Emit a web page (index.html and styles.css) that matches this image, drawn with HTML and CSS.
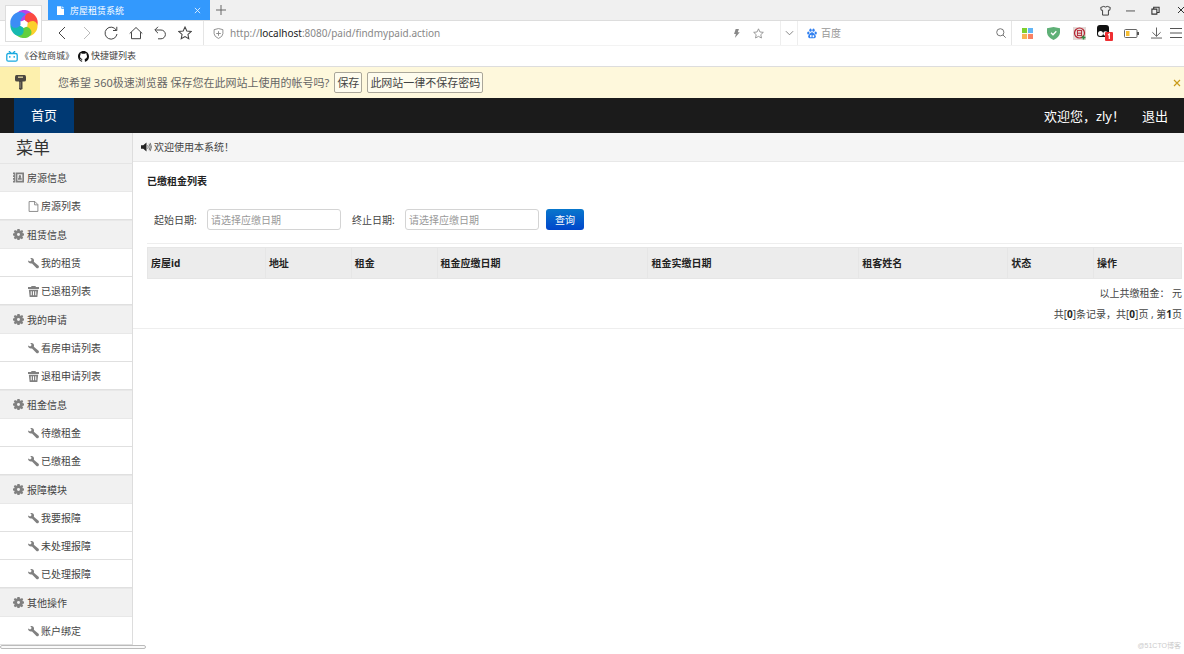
FILE: index.html
```html
<!DOCTYPE html>
<html lang="zh-CN">
<head>
<meta charset="utf-8">
<title>房屋租赁系统</title>
<link rel="stylesheet" href="styles.css">
</head>
<body>
<svg class="defs" aria-hidden="true">
  <symbol id="cog" viewBox="0 0 20 20"><path fill-rule="evenodd" d="M8 0h4l.6 2.600 1.600.7L16.500 1.900l2.100 2.100-1.400 2.300.6 1.600L20 8.200v3.600l-2.300.5-.6 1.600 1.500 2.200-2.400 2.400-2.300-1.400-1.500.6L12 20H8l-.5-2.300-1.500-.6-2.200 1.400-2.400-2.400 1.500-2.200-.6-1.600L0 11.800V8.200l2.300-.5.6-1.500L1.400 4l2.300-2.300L6 3.200l1.500-.6zM10 7.300a2.700 2.700 0 1 0 0 5.400 2.700 2.700 0 0 0 0-5.400z"/></symbol>
  <symbol id="wrench" viewBox="0 0 20 20"><path d="M0 4.500 3.800 6.200 6 4.800l.2-2.600L3.800 0c3.200-.5 6 .6 6.900 3.200.4 1.300.3 2.500-.1 3.400l8.600 7.600c2.200 2.400-1.500 6.200-3.900 4L7.300 9.800C3.800 10.800 0 8.800 0 4.500z"/></symbol>
  <symbol id="trash" viewBox="0 0 20 20"><path fill-rule="evenodd" d="M6 0h8v2h6v3.500H0V2h6zM1.500 7h17L17 20H3zM5 9.500V17h1.800V9.500zm4.100 0V17h1.800V9.500zm4.100 0V17H15V9.500z"/></symbol>
  <symbol id="page" viewBox="0 0 20 20"><path d="M2 1h10.500L18 6.500V19H2zM12 1v6h6" fill="none" stroke="currentColor" stroke-width="1.600"/></symbol>
  <symbol id="book" viewBox="0 0 20 20"><path fill-rule="evenodd" d="M0 1h4v18H0v-3h2v-2H0v-3h2V9H0V6h2V4H0zM5 1h15v18H5zm3 3v12h9V4zm4.500 1.500a2.300 2.300 0 0 1 1.200 4.200c1.400.6 2.300 1.800 2.300 4.300H9c0-2.500.9-3.700 2.300-4.300a2.300 2.300 0 0 1 1.200-4.200z"/></symbol>
  <symbol id="star" viewBox="0 0 20 20"><path d="m10 1.500 2.600 5.700 6.200.7-4.600 4.200 1.200 6.100L10 15.200l-5.400 3 1.200-6.100L1.200 7.900l6.200-.7z" fill="none" stroke="currentColor" stroke-width="1.500"/></symbol>
</svg>

<header class="browser">
  <div class="logo">
    <svg viewBox="-15 -15 30 30" width="30" height="30">
      <defs><path id="petal" d="M-2.500-2.500C-11-4-10-14 0-14C7-14 11-8 9-3C7-5 2-6-2.500-2.500Z"/></defs>
      <use href="#petal" fill="#b942e8" transform="rotate(5)"/>
      <use href="#petal" fill="#fb4a43" transform="rotate(65)"/>
      <use href="#petal" fill="#fbd02c" transform="rotate(125)"/>
      <use href="#petal" fill="#62cf3d" transform="rotate(185)"/>
      <use href="#petal" fill="#16b9b0" transform="rotate(240)"/>
      <use href="#petal" fill="#3c8df5" transform="rotate(300)"/>
      <circle r="2.800" fill="#fff"/>
    </svg>
  </div>
  <div class="tabs">
    <div class="tab">
      <svg viewBox="0 0 8 10" width="7" height="9"><path fill="#fff" d="M0 0h5v3h3v7H0zM6 0l2 2H6z"/></svg>
      <span class="tab-title">房屋租赁系统</span>
      <button class="tab-close" aria-label="关闭标签"><svg viewBox="0 0 8 8" width="7" height="7"><path d="m1 1 6 6M7 1 1 7" stroke="#e5f2ff"/></svg></button>
    </div>
    <button class="new-tab" aria-label="新标签"><svg viewBox="0 0 10 10" width="10" height="10"><path d="M5 0v10M0 5h10" stroke="#666"/></svg></button>
    <div class="window-controls">
      <button aria-label="皮肤"><svg viewBox="0 0 12 12" width="11" height="11"><path d="M4 1.500q2 1.500 4 0l3.200 1.200-.5 3H9.200V11H2.800V5.700H1.300l-.5-3z" fill="none" stroke="#333"/></svg></button>
      <button aria-label="最小化"><svg viewBox="0 0 10 10" width="9" height="9"><path d="M0 5.500h10" stroke="#444"/></svg></button>
      <button aria-label="还原"><svg viewBox="0 0 10 10" width="9" height="9"><path d="M1 3.500h5.500V9H1zM3 3V1.300h6v6H7" fill="none" stroke="#333" stroke-width="1.200"/></svg></button>
      <button aria-label="关闭"><svg viewBox="0 0 8 8" width="8" height="8"><path d="m1 1 6 6M7 1 1 7" stroke="#333"/></svg></button>
    </div>
  </div>

  <div class="toolbar">
    <nav class="tools">
      <button aria-label="后退"><svg viewBox="0 0 14 14" width="14" height="14"><path d="M10 1 4 7l6 6"/></svg></button>
      <button aria-label="前进" class="off"><svg viewBox="0 0 14 14" width="14" height="14"><path d="m4 1 6 6-6 6"/></svg></button>
      <button aria-label="刷新"><svg viewBox="0 0 14 14" width="14" height="14"><path d="M12.300 4.200A6 6 0 1 0 13 8M12.800.8v3.700H9"/></svg></button>
      <button aria-label="主页"><svg viewBox="0 0 14 14" width="14" height="14"><path d="M.7 7.500 7 1.500l6.300 6M2.500 6.200v6.500h9V6.200"/></svg></button>
      <button aria-label="撤销"><svg viewBox="0 0 14 14" width="14" height="14"><path d="M5 .8 1.800 4 5 7.200M2 4h6a4.400 4.400 0 0 1 0 8.800H5"/></svg></button>
      <button aria-label="收藏"><svg width="14" height="14"><use href="#star"/></svg></button>
    </nav>
    <div class="address">
      <svg viewBox="0 0 12 12" width="11" height="11" fill="none" stroke="#888"><path d="m6 .6 4.800 1.200v4.500Q10.500 9.500 6 11.400 1.500 9.500 1.200 6.300V1.800zM6 3.500v5M3.500 6h5"/></svg>
      <span class="url">http://<span class="host">localhost</span>:8080/paid/findmypaid.action</span>
      <svg class="bolt" viewBox="0 0 8 11" width="7" height="9"><path fill="#888" d="M3 0h4L5.500 4H8L2 11l1.300-5H1z"/></svg>
      <svg class="fav" width="11" height="11"><use href="#star"/></svg>
    </div>
    <button class="drop" aria-label="历史地址"><svg viewBox="0 0 10 6" width="9" height="6"><path d="m1 1 4 4 4-4" fill="none" stroke="#777"/></svg></button>
    <div class="search">
      <svg viewBox="0 0 12 12" width="10" height="11" fill="#2f7ff0"><ellipse cx="1.600" cy="5.300" rx="1.400" ry="1.800"/><ellipse cx="4.200" cy="2" rx="1.400" ry="1.900"/><ellipse cx="7.800" cy="2" rx="1.400" ry="1.900"/><ellipse cx="10.400" cy="5.300" rx="1.400" ry="1.800"/><path fill-rule="evenodd" d="M6 4.600c2 0 2.300 2 3.900 3.300 1.500 1.500.7 3.900-1.500 3.900H3.600c-2.200 0-3-2.400-1.500-3.900C3.700 6.600 4 4.600 6 4.600zM3.700 8v2.500h1.700V7.500zm3 0v2.500h1.900V8z"/></svg>
      <input class="search-box" type="text" placeholder="百度" aria-label="搜索">
      <svg viewBox="0 0 10 10" width="10" height="10" fill="none" stroke="#777"><circle cx="4.300" cy="4.300" r="3.600"/><path d="m7 7 2.700 2.700"/></svg>
    </div>
    <div class="extensions">
      <button aria-label="应用"><svg viewBox="0 0 12 12" width="11" height="11"><path fill="#7dd02f" d="M0 0h5.500v5.500H0z"/><path fill="#62b5f5" d="M6.500 0H12v5.500H6.500z"/><path fill="#f9b454" d="M0 6.500h5.500V12H0z"/><path fill="#f98164" d="M6.500 6.500H12V12H6.500z"/></svg></button>
      <button aria-label="安全"><svg viewBox="0 0 13 13" width="13" height="13"><path fill="#5fb077" d="M0 1.200 6.500 0 13 1.200v4.500Q12.500 10 6.500 13 .5 10 0 5.700z"/><path d="m4 5.700 2 2 3.300-3.500" fill="none" stroke="#fff" stroke-width="1.300"/></svg></button>
      <button aria-label="验证"><svg viewBox="0 0 13 13" width="13" height="13"><path fill="#e3d9d6" d="M0 0h13v13H0z"/><circle cx="6.500" cy="6" r="5" fill="none" stroke="#b62432" stroke-width="1.200"/><path d="M4 3.500h5M4 6.200h5M4 8.500h5M4.500 3.500v5M8.500 3.500v5" fill="none" stroke="#b62432" stroke-width=".9"/><path d="M10.500 8.500v4M8.500 10.500h4" stroke="#318b43" stroke-width="1.600"/></svg></button>
      <button aria-label="脚本"><svg viewBox="0 0 16 16" width="16" height="16"><rect width="12" height="12" rx="3" fill="#111"/><circle cx="3.500" cy="8.500" r="2.500" fill="#fff"/><circle cx="8.500" cy="8.500" r="2.300" fill="#fff"/><rect x="8" y="7" width="8" height="9" rx="1" fill="#ef2f32"/><path d="m11 10 1.300-1V14" fill="none" stroke="#fff" stroke-width="1.200"/></svg></button>
      <button aria-label="电池"><svg viewBox="0 0 15 9" width="15" height="9"><rect x=".5" y=".5" width="12.500" height="8" rx="1" fill="none" stroke="#666"/><path fill="#f7be32" d="M2 2h3.500v5H2z"/><path fill="#555" d="M13 3h2v3h-2z"/></svg></button>
      <button aria-label="下载"><svg viewBox="0 0 12 12" width="11" height="12" fill="none" stroke="#555"><path d="M6 0v9.500M1.500 5.200 6 9.600l4.500-4.400M0 11.500h12"/></svg></button>
      <button aria-label="菜单"><svg viewBox="0 0 12 10" width="12" height="10" stroke="#555"><path d="M0 .5h12M0 5h12M0 9.500h12"/></svg></button>
    </div>
  </div>

  <div class="bookmarks">
    <a href="#"><svg viewBox="0 0 12 11" width="12" height="11" fill="none" stroke="#19a9df" stroke-width="1.300"><rect x=".8" y="2.500" width="10.400" height="7.700" rx="1.500"/><path d="m3 0 2 2.300M9 0 7 2.300M3.800 5v1.800M8.200 5v1.800"/></svg>《谷粒商城》</a>
    <a href="#"><svg viewBox="0 0 16 16" width="11" height="11"><path fill="#111" d="M8 0C3.580 0 0 3.580 0 8c0 3.540 2.290 6.530 5.470 7.590.4.070.55-.17.55-.38 0-.19-.01-.82-.01-1.490-2.010.37-2.530-.49-2.690-.94-.09-.23-.48-.94-.82-1.130-.28-.15-.68-.52-.01-.53.63-.01 1.080.58 1.230.82.72 1.210 1.870.87 2.330.66.070-.52.28-.87.51-1.070-1.780-.2-3.640-.89-3.640-3.950 0-.87.31-1.590.82-2.150-.08-.2-.36-1.020.08-2.120 0 0 .67-.21 2.200.82a7.600 7.600 0 0 1 4 0c1.530-1.040 2.200-.82 2.200-.82.44 1.100.16 1.920.08 2.120.51.56.82 1.270.82 2.150 0 3.070-1.870 3.750-3.650 3.950.29.25.54.73.54 1.480 0 1.070-.01 1.930-.01 2.200 0 .21.15.46.55.38A8 8 0 0 0 16 8c0-4.420-3.580-8-8-8z"/></svg>快捷键列表</a>
  </div>

  <div class="notice">
    <div class="key"><svg viewBox="0 0 11 15" width="11" height="15"><path fill="#4b4740" d="M1.500 0h8Q11 0 11 2v3q0 1.500-2 1.500H7.500V14L5.500 15 4 14V6.500H2Q0 6.500 0 5V2Q0 0 1.500 0z"/><path d="M3 2.200h5" stroke="#d8cc99" stroke-width="1.400"/><path d="M5 7v6" stroke="#99927b"/></svg></div>
    <p>您希望 360极速浏览器 保存您在此网站上使用的帐号吗?</p>
    <button class="plain">保存</button>
    <button class="plain">此网站一律不保存密码</button>
    <button class="dismiss" aria-label="关闭提示"><svg viewBox="0 0 8 8" width="8" height="8"><path d="m1 1 6 6M7 1 1 7" stroke="#c99b18" stroke-width="1.200"/></svg></button>
  </div>
</header>

<nav class="navbar">
  <a class="home" href="#">首页</a>
  <span class="welcome">欢迎您，zly！</span>
  <a class="logout" href="#">退出</a>
</nav>

<div class="body">
  <aside class="sidebar">
    <h1>菜单</h1>
    <ul class="menu">
      <li class="group"><svg><use href="#book"/></svg>房源信息</li>
      <li><a href="#"><svg><use href="#page"/></svg>房源列表</a></li>
      <li class="group"><svg><use href="#cog"/></svg>租赁信息</li>
      <li><a href="#"><svg><use href="#wrench"/></svg>我的租赁</a></li>
      <li><a href="#"><svg><use href="#trash"/></svg>已退租列表</a></li>
      <li class="group"><svg><use href="#cog"/></svg>我的申请</li>
      <li><a href="#"><svg><use href="#wrench"/></svg>看房申请列表</a></li>
      <li><a href="#"><svg><use href="#trash"/></svg>退租申请列表</a></li>
      <li class="group"><svg><use href="#cog"/></svg>租金信息</li>
      <li><a href="#"><svg><use href="#wrench"/></svg>待缴租金</a></li>
      <li><a href="#"><svg><use href="#wrench"/></svg>已缴租金</a></li>
      <li class="group"><svg><use href="#cog"/></svg>报障模块</li>
      <li><a href="#"><svg><use href="#wrench"/></svg>我要报障</a></li>
      <li><a href="#"><svg><use href="#wrench"/></svg>未处理报障</a></li>
      <li><a href="#"><svg><use href="#wrench"/></svg>已处理报障</a></li>
      <li class="group"><svg><use href="#cog"/></svg>其他操作</li>
      <li><a href="#"><svg><use href="#wrench"/></svg>账户绑定</a></li>
    </ul>
    <div class="scrollbar"></div>
  </aside>

  <main class="content">
    <div class="crumb"><svg viewBox="0 0 12 10" width="11" height="10"><path fill="#222" d="M0 3h2.500L6 0v10L2.500 7H0z"/><path d="M7.300 3q1.200 2 0 4M8.800 1.500q2.400 3.500 0 7M10 .5q2.800 4.500 0 9" fill="none" stroke="#444" stroke-width=".8"/></svg>欢迎使用本系统！</div>
    <section class="panel">
      <h2>已缴租金列表</h2>
      <form class="filter">
        <label for="from">起始日期:</label>
        <input id="from" type="text" placeholder="请选择应缴日期">
        <label for="to">终止日期:</label>
        <input id="to" type="text" placeholder="请选择应缴日期">
        <button type="button">查询</button>
      </form>
      <table>
        <colgroup><col class="c-id"><col class="c-s"><col class="c-s"><col class="c-date"><col class="c-date"><col class="c-name"><col class="c-s"><col></colgroup>
        <thead><tr><th>房屋id</th><th>地址</th><th>租金</th><th>租金应缴日期</th><th>租金实缴日期</th><th>租客姓名</th><th>状态</th><th>操作</th></tr></thead>
      </table>
      <div class="summary">
        <p>以上共缴租金： 元</p>
        <p>共[<b>0</b>]条记录，共[<b>0</b>]页 , 第<b>1</b>页</p>
      </div>
    </section>
    <footer>@51CTO博客</footer>
  </main>
</div>
</body>
</html>
```
FILE: styles.css
```css
* { box-sizing: border-box; }
body {
  margin: 0;
  min-height: 100vh;
  display: flex;
  flex-direction: column;
  overflow: hidden;
  background: #fff;
  color: #444;
  font: 10px/14px "Noto Sans", "Noto Sans CJK SC", sans-serif;
}
h1, h2, p, ul { margin: 0; padding: 0; }
a { color: inherit; text-decoration: none; }
button { font: inherit; color: inherit; padding: 0; border: 0; background: none; display: flex; align-items: center; justify-content: center; }
input { font: inherit; min-width: 0; }
svg { flex: none; }
.defs { position: absolute; width: 0; height: 0; }

.browser { position: relative; }
.logo {
  position: absolute;
  left: 5px;
  top: 5px;
  width: 37px;
  height: 37px;
  display: flex;
  align-items: center;
  justify-content: center;
  background: #fff;
  border: 1px solid #ddd;
}
.tabs { display: flex; height: 21px; padding-left: 48px; background: #f0f0f0; border-bottom: 1px solid #ddd; overflow: hidden; }
.tab { display: flex; align-items: center; width: 162px; height: 21px; padding: 0 9px; background: #3399fd; color: #fff; font-size: 9px; }
.tab-title { flex: 1; padding-left: 6px; }
.new-tab { width: 22px; }
.window-controls { display: flex; margin-left: auto; margin-right: -9px; }
.window-controls button { width: 25px; }

.toolbar { display: flex; height: 25px; border-bottom: 1px solid #f3f3f3; overflow: hidden; }
.tools { display: flex; width: 204px; padding: 0 6px 0 50px; border-right: 1px solid #e5e5e5; color: #444; }
.tools button { flex: 1; }
.tools path { fill: none; stroke: #444; }
.tools .off path { stroke: #bbb; }
.address { display: flex; flex: 1; align-items: center; padding-left: 9px; color: #888; }
.url { flex: 1; padding-left: 6px; font-size: 10px; }
.host { color: #222; }
.bolt { margin-right: 13px; }
.fav { margin-right: 16px; }
.drop { width: 18px; border: solid #eee; border-width: 0 1px; }
.search { display: flex; align-items: center; width: 214px; padding: 0 5px 0 9px; border-right: 1px solid #e5e5e5; }
.search-box { flex: 1; border: 0; padding: 0 4px; background: none; }
.search-box::placeholder { color: #999; }
.extensions { display: flex; width: 172px; padding-left: 2px; }
.extensions button { flex: none; width: 26px; }
.extensions button:nth-child(6) { width: 24px; }
.extensions button:last-child { width: 16px; }

.bookmarks { display: flex; align-items: center; gap: 4px; height: 20px; padding-left: 6px; font-size: 9px; }
.bookmarks a { display: flex; align-items: center; gap: 2px; }

.notice { display: flex; align-items: center; height: 32px; background: #fef8dc; border-top: 1px solid #ddd; font-size: 11px; }
.key { display: flex; align-items: center; justify-content: center; align-self: stretch; width: 40px; background: #fdf0ad; }
.notice p { padding: 0 5px 0 18px; color: #666; }
.plain { height: 21px; margin-right: 5px; padding: 0 2px; background: #fefcee; border: 1px solid #aaa79a; border-radius: 2px; }
.dismiss { margin-left: auto; margin-right: 3px; }

.navbar { display: flex; align-items: center; height: 35px; padding: 0 16px 0 14px; background: #1b1b1b; color: #fff; font-size: 13px; }
.home { width: 60px; line-height: 35px; text-align: center; background: #003973; }
.welcome { margin-left: auto; padding-right: 17px; }

.body { display: flex; flex: 1; }
.sidebar { width: 133px; flex: none; }
.sidebar h1 { padding-left: 16px; font-size: 17px; line-height: 30px; font-weight: 400; color: #333; background: #f1f1f1; border-right: 1px solid #ddd; border-bottom: 1px solid #e5e5e5; }
.menu { list-style: none; border-right: 1px solid #ddd; }
.menu svg { width: 11px; height: 11px; fill: #808080; color: #808080; }
.menu li { height: 28px; border-bottom: 1px solid #e0e0e0; }
.menu a { display: flex; align-items: center; gap: 2px; height: 28px; padding-left: 28px; }
.menu .group { display: flex; align-items: center; gap: 3px; padding-left: 13px; background: #f1f1f1; border-bottom-color: #e8e8e8; }
.menu li + .group { height: 29px; border-top: 1px solid #e8e8e8; }
.scrollbar { width: 146px; height: 4px; border: 1px solid #bbb; border-radius: 2px; background: #fafafa; }

.content { display: flex; flex-direction: column; flex: 1; min-width: 0; }
.crumb { display: flex; align-items: center; gap: 2px; height: 29px; padding-left: 8px; background: #f5f5f5; border-bottom: 1px solid #e8e8e8; }
.panel { padding: 12px 2px 3px 14px; border-bottom: 1px solid #eee; }
.panel h2 { font-size: 10px; line-height: 14px; color: #222; }
.filter { display: flex; align-items: center; height: 56px; margin-bottom: 3px; padding: 8px 0 0 7px; border-bottom: 1px solid #eee; }
.filter label { width: 53px; }
.filter input { width: 134px; height: 21px; margin-right: 11px; padding: 0 3px; border: 1px solid #d4d4d4; border-radius: 3px; background: #fff; }
.filter input::placeholder { color: #999; }
.filter #to { margin-right: 7px; }
.filter button { width: 38px; height: 21px; border-radius: 3px; color: #fff; background: linear-gradient(#0877cc, #0146cb); }
table { width: 100%; table-layout: fixed; border-collapse: collapse; }
th { height: 31px; padding: 0 3px; text-align: left; color: #222; background: #ececec; border: 1px solid #e6e6e6; }
.c-id { width: 11.4%; }
.c-s { width: 8.3%; }
.c-date { width: 20.4%; }
.c-name { width: 14.4%; }
.summary { padding-top: 4px; text-align: right; line-height: 21px; }
.summary p { white-space: pre; }
.summary b { color: #222; }
footer { margin-top: auto; padding: 0 3px 1px; text-align: right; font: 7px/14px "Liberation Sans", "Noto Sans CJK SC", sans-serif; color: #ccc; }
```
